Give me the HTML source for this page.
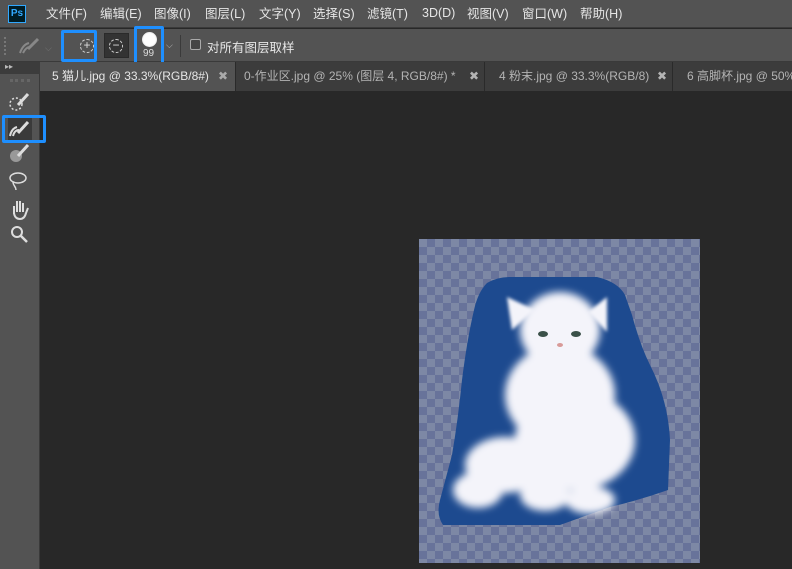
<!DOCTYPE html><html><head><meta charset="utf-8"><style>
*{margin:0;padding:0;box-sizing:border-box}
body{width:792px;height:569px;overflow:hidden;background:#282828;font-family:"Liberation Sans","Noto Sans CJK SC",sans-serif;position:relative;color:#ddd}
.abs{position:absolute}
#menu{left:0;top:0;width:792px;height:28px;background:#535353;border-bottom:1px solid #3a3a3a;font-size:12.5px}
#menu span{position:absolute;top:5px;line-height:18px;height:18px;color:#e6e6e6}
#opt{left:0;top:29px;width:792px;height:33px;background:#535353;border-bottom:1px solid #3a3a3a}
#tabs{left:40px;top:62px;width:752px;height:29px;background:#3c3c3c}
.tab{position:absolute;top:0;height:29px;font-size:12px;line-height:29px;color:#b4b4b4;border-right:1px solid #2a2a2a;padding-left:8px;white-space:nowrap;overflow:hidden}
#tool{left:0;top:62px;width:40px;height:507px;background:#535353;border-right:1px solid #3a3a3a}
.blue{position:absolute;border:3px solid #1e8fff;border-radius:2px}
</style></head><body>
<div id="menu" class="abs">
<div class="abs" style="left:8px;top:5px;width:18px;height:18px;background:#001d26;border:1px solid #31a8ff;color:#31a8ff;font-size:10px;font-weight:bold;text-align:center;line-height:16px">Ps</div>
<span style="left:46px">文件(F)</span><span style="left:100px">编辑(E)</span><span style="left:154px">图像(I)</span><span style="left:205px">图层(L)</span><span style="left:259px">文字(Y)</span><span style="left:313px">选择(S)</span><span style="left:367px">滤镜(T)</span><span style="left:422px;top:4px">3D(D)</span><span style="left:467px">视图(V)</span><span style="left:522px">窗口(W)</span><span style="left:580px">帮助(H)</span>
</div>
<div id="opt" class="abs">
<div class="abs" style="left:4px;top:8px;width:4px;height:18px;border-left:2px dotted #777"></div>
<svg class="abs" style="left:16px;top:8px" width="26" height="20"><path d="M4 16c2-6 5-9 9-10M7 16c2-4 4-6 7-6" stroke="#888" stroke-width="2" fill="none"/><path d="M12 12l10-10" stroke="#888" stroke-width="3"/></svg>
<div class="abs" style="left:45px;top:14px;color:#777;font-size:9px">⌵</div>
<div class="abs" style="left:80px;top:10px;width:14px;height:14px;border:1px dashed #ccc;border-radius:50%;color:#ddd;font-size:12px;line-height:11px;text-align:center">+</div>
<div class="abs" style="left:104px;top:4px;width:25px;height:25px;background:#333;border:1px solid #2a2a2a"></div>
<div class="abs" style="left:109px;top:10px;width:14px;height:14px;border:1px dashed #ccc;border-radius:50%;color:#ddd;font-size:12px;line-height:11px;text-align:center">−</div>
<div class="abs" style="left:142px;top:3px;width:15px;height:15px;border-radius:50%;background:radial-gradient(#fff 55%,#bbb)"></div>
<div class="abs" style="left:143px;top:19px;font-size:10px;color:#ddd">99</div>
<div class="abs" style="left:166px;top:11px;color:#bbb;font-size:9px">⌵</div>
<div class="abs" style="left:180px;top:6px;width:1px;height:22px;background:#3a3a3a"></div>
<div class="abs" style="left:190px;top:10px;width:11px;height:11px;border:1px solid #aaa;border-radius:2px;background:#454545"></div>
<div class="abs" style="left:207px;top:8px;font-size:12.5px;color:#e6e6e6">对所有图层取样</div>
</div>
<div class="blue" style="left:61px;top:30px;width:36px;height:32px"></div>
<div class="blue" style="left:134px;top:26px;width:30px;height:40px"></div>
<div id="tabs" class="abs">
<div class="tab" style="left:0;width:196px;background:#535353;color:#e6e6e6;padding-left:12px">5 猫儿.jpg @ 33.3%(RGB/8#)<span style="position:absolute;left:178px;color:#aaa">✖</span></div>
<div class="tab" style="left:196px;width:249px">0-作业区.jpg @ 25% (图层 4, RGB/8#) *<span style="position:absolute;left:233px">✖</span></div>
<div class="tab" style="left:445px;width:188px;padding-left:14px">4 粉末.jpg @ 33.3%(RGB/8)<span style="position:absolute;left:172px">✖</span></div>
<div class="tab" style="left:633px;width:130px;border:none;padding-left:14px">6 高脚杯.jpg @ 50%</div>
</div>
<div id="tool" class="abs">
<div class="abs" style="left:0;top:0;width:40px;height:12px;background:#3c3c3c;font-size:8px;color:#bbb;padding-left:5px">▸▸</div>
<div class="abs" style="left:10px;top:17px;width:20px;height:4px;border-top:3px dotted #666"></div>
<svg class="abs" style="left:8px;top:28px" width="24" height="160" fill="none" stroke="#ddd">
<circle cx="8" cy="14" r="6" stroke-dasharray="2 2" stroke-width="1.5"/><path d="M10 15l10-11" stroke-width="3"/>
<rect x="-1" y="28" width="26" height="22" fill="#3a3a3a" stroke="none"/>
<path d="M2 46c1-5 3-8 7-9M5 46c1-4 3-6 6-6" stroke-width="2"/><path d="M10 43l10-11" stroke-width="3"/>
<circle cx="8" cy="66" r="6" fill="#999" stroke="none"/><path d="M10 66l10-11" stroke-width="3"/>
<ellipse cx="10" cy="88" rx="8" ry="5" stroke-width="1.5"/><path d="M5 92c0 4 3 4 3 8" stroke-width="1.5"/>
<path d="M6 124v-8M9 122v-11M12 122v-11M15 122v-9M6 122c0 5 3 7 6 7s5-2 6-6l2-5" stroke-width="2"/>
<circle cx="9" cy="142" r="5" stroke-width="2"/><path d="M13 146l6 6" stroke-width="2.5"/>
</svg>
</div>
<div class="blue" style="left:2px;top:115px;width:44px;height:28px"></div>
<div class="abs" style="left:419px;top:239px;width:281px;height:324px;background-color:#7d88a5;background-image:linear-gradient(45deg,#68739a 25%,transparent 25%,transparent 75%,#68739a 75%),linear-gradient(45deg,#68739a 25%,transparent 25%,transparent 75%,#68739a 75%);background-size:16px 16px;background-position:0 0,8px 8px"></div>
<svg class="abs" style="left:0;top:0" width="792" height="569">
<defs><filter id="b"><feGaussianBlur stdDeviation="4"/></filter><filter id="s"><feGaussianBlur stdDeviation="1.5"/></filter></defs>
<path fill="#1d4a8f" d="M487 283Q497 277 510 277L597 277Q618 282 625 295L632 315Q640 345 650 365Q668 400 670 440L668 490Q640 500 610 507L560 525L443 525Q436 515 440 500L452 455Q458 420 462 380Q467 340 474 310Q478 292 487 283Z"/>
<g fill="#f4f4fa" filter="url(#b)">
<ellipse cx="560" cy="330" rx="40" ry="38"/>
<ellipse cx="560" cy="395" rx="55" ry="50"/>
<ellipse cx="575" cy="440" rx="60" ry="50"/>
<ellipse cx="505" cy="465" rx="40" ry="28"/>
<ellipse cx="478" cy="490" rx="25" ry="18"/>
<ellipse cx="545" cy="495" rx="25" ry="16"/>
<ellipse cx="590" cy="500" rx="25" ry="14"/>
</g>
<g fill="#f4f4fa" filter="url(#s)">
<polygon points="507,297 535,310 512,330"/><polygon points="607,297 588,312 607,332"/>
</g>
<ellipse cx="543" cy="334" rx="5" ry="3" fill="#3a5048"/><ellipse cx="576" cy="334" rx="5" ry="3" fill="#3a5048"/>
<ellipse cx="560" cy="345" rx="3" ry="2" fill="#d89a98"/>
</svg>
</body></html>
